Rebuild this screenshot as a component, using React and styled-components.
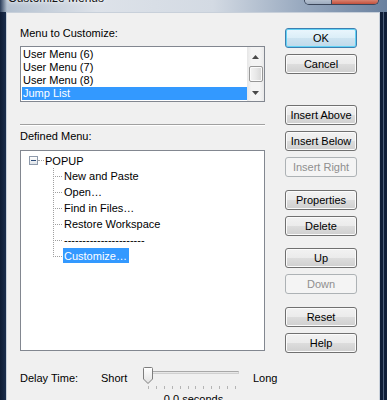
import React from 'react';
import styled, { createGlobalStyle } from 'styled-components';

const GlobalStyle = createGlobalStyle`
  html, body {
    margin: 0;
    padding: 0;
    background: #13233f;
  }
  body {
    font-family: "Liberation Sans", Arial, sans-serif;
    font-size: 11px;
    color: #000;
  }
`;

const Window = styled.div`
  width: 387px;
  height: 400px;
  overflow: hidden;
  display: flex;
  flex-direction: column;
  background: #13233f;
`;

const TitleBar = styled.div`
  flex: none;
  height: 12px;
  display: flex;
  justify-content: space-between;
  align-items: flex-start;
  padding: 0 8px;
  overflow: hidden;
  background: linear-gradient(
    to right,
    #2a3c58 0px,
    #b4c1d0 7px,
    #dde2e9 25%,
    #d3dae3 55%,
    #98a9bf 78%,
    #6a819f 100%
  );
`;

const Caption = styled.span`
  margin-top: -10px;
  font-family: "Liberation Sans", Arial, sans-serif;
  font-size: 12px;
  line-height: 16px;
  color: #141414;
  text-shadow: 0 0 6px #fff, 0 0 3px #fff;
`;

const CaptionButtons = styled.div`
  display: flex;
  height: 4px;
  border: 1px solid #3a465a;
  border-top: none;
  border-radius: 0 0 5px 5px;
  overflow: hidden;
`;

const CaptionButton = styled.div`
  width: ${(p) => p.$w}px;
  background: ${(p) => p.$bg};
  & + & {
    border-left: 1px solid #3a465a;
  }
`;

const Body = styled.div`
  flex: 1;
  display: flex;
  min-height: 0;
`;

const LeftFrame = styled.div`
  width: 6px;
  background: linear-gradient(to right, #0e1b33, #1b2d4c);
`;

const RightFrame = styled.div`
  flex: 1;
  background: linear-gradient(
    to right,
    #0f1e38 0 3px,
    #4d5f7a 3px 4px,
    #0f1e38 4px
  );
`;

const Client = styled.div`
  flex: 0 0 374px;
  box-sizing: border-box;
  border: 1px solid #c8d0da;
  border-bottom: none;
  background: #f0f0f0;
  padding: 14px 0 0 13px;
`;

const Main = styled.div`
  display: grid;
  grid-template-columns: 245px 72px;
  column-gap: 20px;
  align-items: start;
`;

const LeftCol = styled.div`
  display: flex;
  flex-direction: column;
`;

const FieldLabel = styled.div`
  height: 13px;
  line-height: 13px;
  margin-top: ${(p) => p.$mt || 0}px;
`;

const ListBox = styled.div`
  margin-top: 6px;
  height: 56px;
  box-sizing: border-box;
  border: 1px solid #828790;
  background: #fff;
  display: flex;
`;

const Items = styled.div`
  flex: 1;
  padding: 1px 0 1px 1px;
`;

const Item = styled.div`
  height: 13px;
  line-height: 13px;
  padding-left: 1px;
  white-space: nowrap;
  background: ${(p) => (p.$selected ? '#3399ff' : 'transparent')};
  color: ${(p) => (p.$selected ? '#fff' : '#000')};
`;

const ScrollBar = styled.div`
  width: 17px;
  display: flex;
  flex-direction: column;
  background: linear-gradient(to right, #e6e6e6, #f4f4f4 25%, #f4f4f4 75%, #e9e9e9);
`;

const ArrowBtn = styled.div`
  height: 17px;
  display: flex;
  align-items: center;
  justify-content: center;
  padding-top: ${(p) => (p.$down ? 0 : 2)}px;
  box-sizing: border-box;
`;

const Track = styled.div`
  flex: 1;
  padding: 2px 1px 0 2px;
`;

const Thumb = styled.div`
  height: 16px;
  box-sizing: border-box;
  border: 1px solid #979797;
  border-radius: 2px;
  background: linear-gradient(to right, #f4f4f4, #e8e8e8 50%, #d6d6d6);
  box-shadow: inset 0 0 0 1px #fbfbfb;
`;

const Separator = styled.div`
  margin-top: 22px;
  height: 0;
  border-top: 1px solid #a0a0a0;
  border-bottom: 1px solid #fff;
`;

const TreeBox = styled.div`
  margin-top: 7px;
  height: 201px;
  box-sizing: border-box;
  border: 1px solid #828790;
  background: #fff;
  padding-top: 1px;
`;

const RootRow = styled.div`
  height: 16px;
  display: flex;
  align-items: center;
  padding-left: 8px;
`;

const Expander = styled.div`
  width: 9px;
  height: 9px;
  box-sizing: border-box;
  border: 1px solid #8e9aab;
  background: linear-gradient(#ffffff, #dfe3e8);
  display: flex;
  align-items: center;
  justify-content: center;
  &::after {
    content: '';
    width: 5px;
    height: 1px;
    background: #2b4a78;
  }
`;

const Stub = styled.div`
  width: 6px;
  height: 0;
  border-top: 1px dotted #a0a0a0;
  margin-top: 1px;
`;

const NodeLabel = styled.span`
  height: 15px;
  line-height: 16px;
  padding: 0 2px 0 1px;
  white-space: nowrap;
  background: ${(p) => (p.$selected ? '#3399ff' : 'transparent')};
  color: ${(p) => (p.$selected ? '#fff' : '#000')};
`;

const ChildRow = styled.div`
  height: 16px;
  display: flex;
  align-items: flex-start;
  padding-left: 32px;
`;

const RightCol = styled.div`
  display: flex;
  flex-direction: column;
  margin-top: 1px;
`;

const Button = styled.button`
  margin-top: ${(p) => p.$mt || 0}px;
  width: 72px;
  height: 20px;
  padding: 0;
  box-sizing: border-box;
  border: 1px solid #707070;
  border-radius: 3px;
  font-family: "Liberation Sans", Arial, sans-serif;
  font-size: 11px;
  line-height: 18px;
  color: #000;
  background: linear-gradient(#f2f2f2 0%, #ebebeb 50%, #dddddd 50%, #cfcfcf 100%);
  box-shadow: inset 0 0 0 1px #fbfbfb;

  ${(p) =>
    p.$default &&
    `
    border-color: #3c7fb1;
    background: linear-gradient(#eaf6fd 0%, #dbeef8 50%, #cde4f1 50%, #bfd9ea 100%);
    box-shadow: inset 0 0 0 1px #62d2f5;
  `}

  &:disabled {
    border-color: #adb2b5;
    background: #f4f4f4;
    color: #8f8f8f;
    box-shadow: none;
  }
`;

const DelayRow = styled.div`
  margin-top: 13px;
  display: flex;
  align-items: flex-start;
`;

const RowText = styled.div`
  width: ${(p) => (p.$w ? `${p.$w}px` : 'auto')};
  margin-top: 6px;
  line-height: 13px;
  white-space: nowrap;
`;

const SliderCol = styled.div`
  width: 101px;
  margin-right: 9px;
  display: flex;
  flex-direction: column;
`;

const SliderBox = styled.div`
  position: relative;
  height: 23px;
`;

const SliderTrack = styled.div`
  margin: 5px 0 0 4px;
  width: 92px;
  height: 3px;
  box-sizing: border-box;
  border: 1px solid #d0d0d0;
  border-top-color: #a8a8a8;
  background: #e7e7e7;
`;

const SliderThumb = styled.svg`
  position: absolute;
  left: 0;
  top: 1px;
`;

const Ticks = styled.div`
  margin: 12px 0 0 5px;
  width: 88px;
  display: flex;
  justify-content: space-between;
`;

const Tick = styled.div`
  width: 1px;
  height: 3px;
  background: #b4b4b4;
`;

const SliderCaption = styled.div`
  margin-top: 4px;
  text-align: center;
  line-height: 13px;
  white-space: nowrap;
`;

const Arrow = ({ down }) => (
  <svg width="7" height="4" viewBox="0 0 7 4">
    <path d={down ? 'M0 0 H7 L3.5 4 Z' : 'M0 4 H7 L3.5 0 Z'} fill="#4a4a4a" />
  </svg>
);

const Connector = ({ last }) => (
  <svg width="10" height="16" viewBox="0 0 10 16" shapeRendering="crispEdges">
    <line x1="0.5" y1="0" x2="0.5" y2={last ? 9 : 16} stroke="#a0a0a0" strokeDasharray="1 1" />
    <line x1="1" y1="8.5" x2="10" y2="8.5" stroke="#a0a0a0" strokeDasharray="1 1" strokeDashoffset="1" />
  </svg>
);

const menus = [
  { label: 'User Menu (6)' },
  { label: 'User Menu (7)' },
  { label: 'User Menu (8)' },
  { label: 'Jump List', selected: true },
];

const children = [
  { label: 'New and Paste' },
  { label: 'Open…' },
  { label: 'Find in Files…' },
  { label: 'Restore Workspace' },
  { label: '----------------------' },
  { label: 'Customize…', selected: true },
];

const buttons = [
  { label: 'OK', mt: 0, isDefault: true },
  { label: 'Cancel', mt: 6 },
  { label: 'Insert Above', mt: 31 },
  { label: 'Insert Below', mt: 6 },
  { label: 'Insert Right', mt: 6, disabled: true },
  { label: 'Properties', mt: 13 },
  { label: 'Delete', mt: 6 },
  { label: 'Up', mt: 12 },
  { label: 'Down', mt: 6, disabled: true },
  { label: 'Reset', mt: 13 },
  { label: 'Help', mt: 6 },
];

export default function App() {
  return (
    <>
      <GlobalStyle />
      <Window>
        <TitleBar>
          <Caption>Customize Menus</Caption>
          <CaptionButtons>
            <CaptionButton $w={26} $bg="linear-gradient(#b4c0cf, #9dabbe)" />
            <CaptionButton $w={46} $bg="linear-gradient(#d9826f, #c2503c)" />
          </CaptionButtons>
        </TitleBar>
        <Body>
          <LeftFrame />
          <Client>
            <Main>
              <LeftCol>
                <FieldLabel>Menu to Customize:</FieldLabel>
                <ListBox>
                  <Items>
                    {menus.map((m) => (
                      <Item key={m.label} $selected={m.selected}>
                        {m.label}
                      </Item>
                    ))}
                  </Items>
                  <ScrollBar>
                    <ArrowBtn>
                      <Arrow />
                    </ArrowBtn>
                    <Track>
                      <Thumb />
                    </Track>
                    <ArrowBtn $down>
                      <Arrow down />
                    </ArrowBtn>
                  </ScrollBar>
                </ListBox>
                <Separator />
                <FieldLabel $mt={4}>Defined Menu:</FieldLabel>
                <TreeBox>
                  <RootRow>
                    <Expander />
                    <Stub />
                    <NodeLabel>POPUP</NodeLabel>
                  </RootRow>
                  {children.map((c, i) => (
                    <ChildRow key={c.label}>
                      <Connector last={i === children.length - 1} />
                      <NodeLabel $selected={c.selected}>{c.label}</NodeLabel>
                    </ChildRow>
                  ))}
                </TreeBox>
              </LeftCol>
              <RightCol>
                {buttons.map((b) => (
                  <Button
                    key={b.label}
                    $mt={b.mt}
                    $default={b.isDefault}
                    disabled={b.disabled}
                  >
                    {b.label}
                  </Button>
                ))}
              </RightCol>
            </Main>
            <DelayRow>
              <RowText $w={81}>Delay Time:</RowText>
              <RowText $w={42}>Short</RowText>
              <SliderCol>
                <SliderBox>
                  <SliderTrack />
                  <Ticks>
                    {Array.from({ length: 12 }).map((_, i) => (
                      <Tick key={i} />
                    ))}
                  </Ticks>
                  <SliderThumb width="10" height="17" viewBox="0 0 10 17">
                    <defs>
                      <linearGradient id="thumbFill" x1="0" y1="0" x2="0" y2="1">
                        <stop offset="0" stopColor="#ffffff" />
                        <stop offset="1" stopColor="#e1e1e1" />
                      </linearGradient>
                    </defs>
                    <path
                      d="M0.5 1.5 Q0.5 0.5 1.5 0.5 H8.5 Q9.5 0.5 9.5 1.5 V12 L5 16.5 L0.5 12 Z"
                      fill="url(#thumbFill)"
                      stroke="#7d7d7d"
                    />
                  </SliderThumb>
                </SliderBox>
                <SliderCaption>0.0 seconds</SliderCaption>
              </SliderCol>
              <RowText>Long</RowText>
            </DelayRow>
          </Client>
          <RightFrame />
        </Body>
      </Window>
    </>
  );
}
